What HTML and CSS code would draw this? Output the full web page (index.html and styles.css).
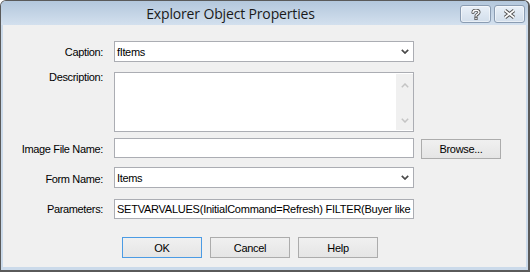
FILE: index.html
```html
<!DOCTYPE html>
<html lang="en">
<head>
  <meta charset="UTF-8">
  <title>Explorer Object Properties</title>
  <link rel="stylesheet" href="styles.css">
</head>
<body>

<div class="ventana">
  <div class="titulo">
    <div class="titulo-texto">Explorer Object Properties</div>
    <div class="titulo-botones">
      <span class="tbtn">
        <svg width="10" height="11" viewBox="0 0 10 11">
          <path d="M2 3.5 C2 0.5 8 0.5 8 3.3 C8 5.3 5 5.2 5 7" fill="none" stroke="#555" stroke-width="3.2" stroke-linecap="round"/>
          <path d="M2 3.5 C2 0.5 8 0.5 8 3.3 C8 5.3 5 5.2 5 7" fill="none" stroke="#fff" stroke-width="1.4" stroke-linecap="round"/>
          <rect x="3.4" y="8" width="3.2" height="3" fill="#555"/>
          <rect x="4.3" y="8.8" width="1.4" height="1.4" fill="#fff"/>
        </svg>
      </span>
      <span class="tbtn">
        <svg width="13" height="10" viewBox="0 0 13 10">
          <path d="M2 1.5 L11 8.5 M11 1.5 L2 8.5" fill="none" stroke="#555" stroke-width="3.6"/>
          <path d="M2 1.5 L11 8.5 M11 1.5 L2 8.5" fill="none" stroke="#fff" stroke-width="1.6"/>
        </svg>
      </span>
    </div>
  </div>

  <div class="cliente">
    <div class="fila fila-caption">
      <div class="etiqueta">Caption:</div>
      <div class="caja combo">
        <span class="valor">fItems</span>
        <svg class="flecha" width="8" height="5" viewBox="0 0 8 5"><path d="M0.8 0.8 L4 4 L7.2 0.8" fill="none" stroke="#4a4a4a" stroke-width="1.7"/></svg>
      </div>
    </div>

    <div class="fila fila-desc">
      <div class="etiqueta arriba">Description:</div>
      <div class="caja memo">
        <span class="valor"></span>
        <div class="barra">
          <svg width="8" height="5" viewBox="0 0 8 5"><path d="M0.8 4.2 L4 1 L7.2 4.2" fill="none" stroke="#c4c4c4" stroke-width="1.5"/></svg>
          <svg width="8" height="5" viewBox="0 0 8 5"><path d="M0.8 0.8 L4 4 L7.2 0.8" fill="none" stroke="#c4c4c4" stroke-width="1.5"/></svg>
        </div>
      </div>
    </div>

    <div class="fila fila-imagen">
      <div class="etiqueta">Image File Name:</div>
      <div class="caja texto"><span class="valor"></span></div>
      <button class="boton examinar">Browse...</button>
    </div>

    <div class="fila fila-form">
      <div class="etiqueta">Form Name:</div>
      <div class="caja combo">
        <span class="valor">Items</span>
        <svg class="flecha" width="8" height="5" viewBox="0 0 8 5"><path d="M0.8 0.8 L4 4 L7.2 0.8" fill="none" stroke="#4a4a4a" stroke-width="1.7"/></svg>
      </div>
    </div>

    <div class="fila fila-param">
      <div class="etiqueta">Parameters:</div>
      <div class="caja texto"><span class="valor largo">SETVARVALUES(InitialCommand=Refresh) FILTER(Buyer like</span></div>
    </div>

    <div class="acciones">
      <button class="boton predeterminado">OK</button>
      <button class="boton">Cancel</button>
      <button class="boton">Help</button>
    </div>
  </div>
</div>

</body>
</html>
```

FILE: styles.css
```css
body { margin: 0; font-family: "Liberation Sans", Arial, sans-serif; font-size: 11px; color: #000; }

.ventana {
  width: 530px; height: 272px;
  box-sizing: border-box;
  border: 1px solid #5a5a5a;
  border-right-width: 2px; border-bottom-width: 2px;
  border-radius: 6px 6px 0 0;
  background: #cbdaea;
  display: flex; flex-direction: column;
  overflow: hidden;
}

/* barra de titulo */
.titulo {
  height: 24px; flex: none;
  display: flex; align-items: flex-start;
  background: linear-gradient(#b3c7dc, #d3e0ee);
}
.titulo-texto {
  flex: 1; text-align: center;
  font-family: "Open Sans", "Noto Sans", sans-serif;
  font-size: 14px; letter-spacing: -0.15px;
  color: #1a1a1a;
  padding-top: 3px; line-height: 19px;
}
.titulo-botones { display: flex; gap: 3px; margin: 4px 3px 0 0; }
.tbtn {
  width: 31px; height: 18px; box-sizing: border-box;
  border: 1px solid #8a9cb2; border-radius: 3px;
  background: linear-gradient(#e9f0f8, #d2deeb);
  box-shadow: inset 0 0 0 1px rgba(255,255,255,0.5);
  display: flex; align-items: center; justify-content: center;
}

/* area de cliente */
.cliente {
  flex: 1;
  margin: 0 2px 3px 2px;
  background: #f0f0f0;
  padding-top: 16px;
}
.fila { display: flex; align-items: center; }
.fila-desc { margin-top: 10px; align-items: flex-start; }
.fila-imagen { margin-top: 6px; align-items: flex-start; }
.fila-form { margin-top: 8px; }
.fila-param { margin-top: 11px; }

.etiqueta {
  width: 100px; margin-right: 11px;
  text-align: right; letter-spacing: -0.35px;
  white-space: nowrap;
}
.etiqueta.arriba { margin-top: -1px; }
.fila-imagen .etiqueta { margin-top: 5px; }
.fila-form .etiqueta { padding-top: 3px; }

.caja {
  width: 300px; box-sizing: border-box;
  border: 1px solid #abadb3;
  background: #fff;
  display: flex; align-items: center;
  overflow: hidden;
}
.valor {
  flex: 1; padding-left: 2px;
  white-space: nowrap; overflow: hidden;
  letter-spacing: -0.35px;
}
.valor.largo { letter-spacing: -0.24px; }
.combo { height: 21px; padding-right: 4px; }
.texto { height: 20px; }
.memo { height: 60px; align-items: stretch; }
.barra {
  width: 17px; background: #f0f0f0;
  display: flex; flex-direction: column; align-items: center; justify-content: space-between;
  padding: 9px 0 7px;
  margin: 1px 0;
}

.boton {
  width: 80px; height: 21px; box-sizing: border-box;
  border: 1px solid #acacac;
  background: linear-gradient(#f0f0f0, #e5e5e5);
  font-family: inherit; font-size: 11px; color: #000;
  letter-spacing: -0.3px;
  padding: 0;
}
.examinar { margin: 1px 0 0 7px; height: 20px; }
.predeterminado { border-color: #4b9be4; }

.acciones { display: flex; gap: 8px; margin: 18px 0 0 119px; }
```
